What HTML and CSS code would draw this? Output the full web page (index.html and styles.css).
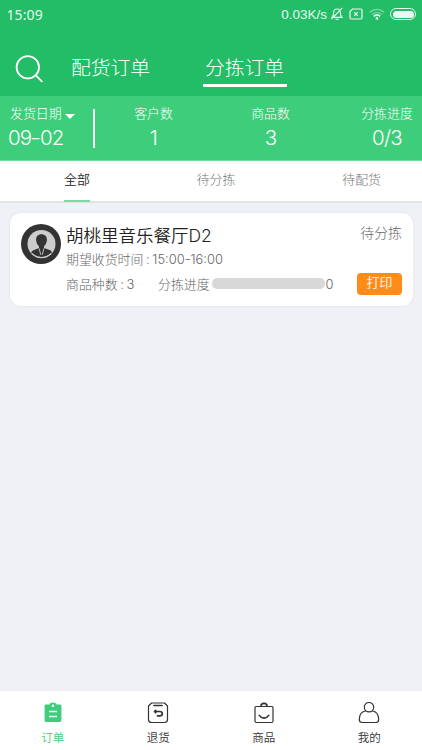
FILE: index.html
```html
<!DOCTYPE html>
<html lang="zh-CN">
<head>
<meta charset="utf-8">
<title>分拣订单</title>
<link rel="stylesheet" href="styles.css">
</head>
<body>
<header class="header">
  <div class="status">
    <span class="clock">15:09</span>
    <span class="speed">0.03K/s</span>
    <svg class="bell" width="14" height="14" viewBox="0 0 14 14"><path d="M2.2 10.3h9.6c-1.1-1-1.4-2-1.4-4.5C10.400 3.500 9 2 7 2S3.600 3.500 3.600 5.800c0 2.500-.3 3.500-1.400 4.500zM5.500 12.300h3M12.300.8L1.500 12.200"/></svg>
    <svg class="sim" width="14" height="12" viewBox="0 0 14 12"><path d="M3.500 1h8.300c.8 0 1.200.4 1.200 1.200v7.600c0 .8-.4 1.200-1.200 1.200H2.200C1.400 11 1 10.600 1 9.800V3.500z"/><path class="cross" d="M5.200 4.200l3.600 3.600M8.800 4.200L5.200 7.800"/></svg>
    <svg class="wifi" width="16" height="12" viewBox="0 0 16 12"><path class="faint" d="M.8 4.300Q8-1.600 15.200 4.300M3 6.600Q8 2.400 13 6.600"/><path class="near" d="M4.800 8.300Q8 5.600 11.200 8.300"/><circle cx="8" cy="10.400" r="1.400"/></svg>
    <span class="battery"><i></i></span>
  </div>
  <nav class="modes">
    <svg class="search" width="28" height="28" viewBox="0 0 28 28"><circle cx="12.800" cy="12.300" r="11.200"/><path d="M20.800 20.300l6 6"/></svg>
    <a class="mode">配货订单</a>
    <a class="mode current">分拣订单</a>
  </nav>
</header>
<section class="stats">
  <div class="stat date"><span class="label">发货日期<i class="caret"></i></span><strong>09<span class="dash">-</span>02</strong></div>
  <div class="stat"><span class="label">客户数</span><strong>1</strong></div>
  <div class="stat"><span class="label">商品数</span><strong>3</strong></div>
  <div class="stat progress"><span class="label">分拣进度</span><strong>0/3</strong></div>
</section>
<nav class="tabs">
  <a class="tab active">全部</a>
  <a class="tab">待分拣</a>
  <a class="tab">待配货</a>
</nav>
<main class="orders">
  <article class="card">
    <svg class="avatar" width="40" height="40" viewBox="0 0 40 40"><circle cx="20" cy="20" r="20" fill="#333"/><circle cx="20.500" cy="20" r="14" fill="#ccc"/><path d="M20.500 10.300c3.800 0 5.600 2.600 5.400 5.700-.2 3-1.500 5-2.900 6.200v1.700l5.700 2.200c1.300.5 1.900 1.300 2.200 2.700A14 14 0 0 1 10.300 29c.3-1.500.9-2.300 2.200-2.800l5.500-2.300v-1.700c-1.400-1.200-2.700-3.200-2.900-6.200-.2-3.100 1.600-5.700 5.400-5.700z" fill="#333"/><path d="M18 24.300l1.800 6.500M23 24.300l-1.800 6.500" stroke="#ccc" stroke-width=".9"/><path d="M11 29.500a13 13 0 0 0 19 0" fill="none" stroke="#ccc" stroke-width="1.200"/></svg>
    <div class="info">
      <div class="line title"><h2>胡桃里音乐餐厅D2</h2><span class="state">待分拣</span></div>
      <div class="line time">期望收货时间<span class="colon">:</span>15:00<span class="dash">-</span>16:00</div>
      <div class="line detail">
        <span class="kinds">商品种数<span class="colon">:</span>3</span>
        <span>分拣进度</span><span class="bar"></span><span>0</span>
        <button class="print">打印</button>
      </div>
    </div>
  </article>
</main>
<footer class="bottom">
  <a class="item on"><svg width="22" height="22" viewBox="0 0 22 22"><path fill="#3ecd7b" d="M4 2.500h3.500C7.800 1.200 9.100.5 11 .5s3.200.7 3.500 2H18c1 0 1.400.5 1.400 1.400v14.700c0 1-.4 1.400-1.400 1.400H4c-1 0-1.400-.5-1.400-1.400V3.900C2.600 3 3 2.500 4 2.500z"/><circle cx="11" cy="3.800" r="1.300" fill="#fff"/><path d="M7 9.500h8M7 14.500h8" stroke="#fff" stroke-width="1.500"/></svg>订单</a>
  <a class="item"><svg class="outline" width="22" height="22" viewBox="0 0 22 22"><path d="M4.500 1h13L20.500 4v13.500c0 2-1 3-3 3h-13c-2 0-3-1-3-3V4z"/><path class="bold" d="M7 3.500h8M7.500 9.500h5.200c3.500 0 3.500 4.300 0 4.300H10.500M8.700 8.300L7.500 9.500l1.200 1.200"/></svg>退货</a>
  <a class="item"><svg class="outline" width="22" height="22" viewBox="0 0 22 22"><path d="M3 4.500h16c.7 0 1 .3 1 1v13.500c0 1-.5 1.500-1.500 1.500h-15c-1 0-1.500-.5-1.500-1.500V5.500c0-.7.300-1 1-1z"/><path class="bold" d="M8 4c0-1.800 1.100-2.700 3-2.700S14 2.200 14 4M6.300 13.400c2.300 3.500 7.100 3.500 9.400 0"/></svg>商品</a>
  <a class="item"><svg class="outline" width="22" height="22" viewBox="0 0 22 22"><circle cx="11" cy="5.200" r="4.700"/><path d="M7.300 9C3.300 9.800 1.300 13 1.300 17.500c0 2 1 3 2.800 3h13.800c1.800 0 2.800-1 2.800-3 0-4.500-2-7.700-6-8.500"/></svg>我的</a>
</footer>
</body>
</html>
```
FILE: styles.css
```css
* { box-sizing: border-box; }
body {
  margin: 0;
  width: 422px;
  height: 750px;
  display: flex;
  flex-direction: column;
  overflow: hidden;
  background: #f0f1f6;
  color: #333;
  font: 300 12.900px/18px Inter, "Noto Sans CJK SC", sans-serif;
}
.header { height: 96px; background: #22bd66; color: #fff; flex: none; }
.status { display: flex; align-items: center; height: 28px; padding: 0 6px 0 6.500px; font: 400 14px/20px "Noto Sans", sans-serif; opacity: .9; }
.clock { letter-spacing: .1px; padding-top: 1px; }
.speed { margin-left: auto; padding-top: 1px; font: 400 13.500px/20px "Liberation Sans", sans-serif; }
.status svg { fill: none; stroke: #fff; stroke-width: 1.200; }
.bell { margin-left: 3px; }
.sim { margin-left: 5px; }
.wifi { margin-left: 6px; }
.wifi .faint { opacity: .5; }
.wifi .near { stroke-width: 1.600; }
.wifi circle { fill: #fff; stroke: none; }
.battery { width: 26px; height: 12px; border: 1px solid #fff; border-radius: 6px; padding: 1.500px; margin-left: 5px; }
.battery i { display: block; height: 7px; border-radius: 3.500px; background: #fff; }
.modes { display: flex; height: 59px; padding-left: 15px; }
.search { margin-top: 27px; fill: none; stroke: #fff; stroke-width: 1.800; stroke-linecap: round; }
.mode { margin-left: 26px; width: 84px; height: 59px; padding: 25px 2px 0; font-size: 19.800px; line-height: 30px; white-space: nowrap; }
.mode.current { margin-left: 50px; border-bottom: 3px solid #fff; border-radius: 1px; }
.stats { display: grid; grid-template-columns: 95px 117px 117px 93px; height: 65px; padding-top: 9px; background: #3ecd7b; color: #fff; flex: none; border-bottom: 1px solid #74dba0; }
.stat { display: flex; flex-direction: column; align-items: center; }
.label { line-height: 18px; white-space: nowrap; }
.stat strong { font-size: 20.500px; font-weight: 300; line-height: 28px; letter-spacing: -.8px; margin-top: 1px; }
.dash { display: inline-block; transform: scaleX(1.150); }
.date { align-items: flex-start; padding-left: 8px; border-right: 2px solid #fff; height: 39px; margin-top: 4px; }
.date .label { margin: -4px 0 0 2px; }
.caret { display: inline-block; margin-left: 3px; border: 5px solid transparent; border-top-color: #fff; border-bottom: 0; vertical-align: -1px; }
.progress { padding-left: 23px; }
.tabs { display: flex; justify-content: space-between; height: 42px; padding: 0 41px 0 64px; background: #fff; border-bottom: 2px solid #e1e2e5; flex: none; }
.tab { height: 41px; padding-top: 9px; color: #777; line-height: 20px; }
.tab.active { color: #222; font-weight: 350; border-bottom: 2px solid #7bdba5; }
.orders { flex: 1; padding: 10px 9px 0 10px; }
.card { display: flex; height: 93px; padding: 11px 11px 0; border-radius: 11px; background: #fff; box-shadow: 0 0 3px #dedfe8; }
.avatar { flex: none; }
.info { flex: 1; margin-left: 5px; color: #666; }
.line { display: flex; align-items: center; white-space: nowrap; }
.title { height: 24px; justify-content: space-between; }
.title h2 { margin: 0; font-size: 17.500px; font-weight: 350; color: #222; }
.state { font-size: 13.900px; margin-top: -6px; }
.time { height: 22px; padding-top: 2px; }
.colon { display: inline-block; width: 9px; text-align: center; }
.detail { height: 28px; }
.detail > span:not(.bar) { padding-top: 2px; }
.kinds { width: 92px; }
.bar { width: 113px; height: 11px; margin: -2px 1px 0 2px; background: #d8d8d8; border-radius: 5px; }
.print { margin-left: auto; width: 45px; height: 22px; padding: 0 0 4px; border: 0; border-radius: 4px; background: #ff8c18; color: #fff; font: 350 12.900px/18px "Noto Sans CJK SC", sans-serif; }
.bottom { display: grid; grid-template-columns: repeat(4, 1fr); height: 59px; background: #fff; flex: none; }
.item { display: flex; flex-direction: column; align-items: center; padding-top: 11px; font-size: 11.500px; font-weight: 350; line-height: 18px; gap: 5px; }
.item.on { color: #3ecd7b; }
.outline { fill: none; stroke: #333; stroke-width: 1.200; stroke-linecap: round; stroke-linejoin: round; }
.outline .bold { stroke-width: 1.700; }
```
